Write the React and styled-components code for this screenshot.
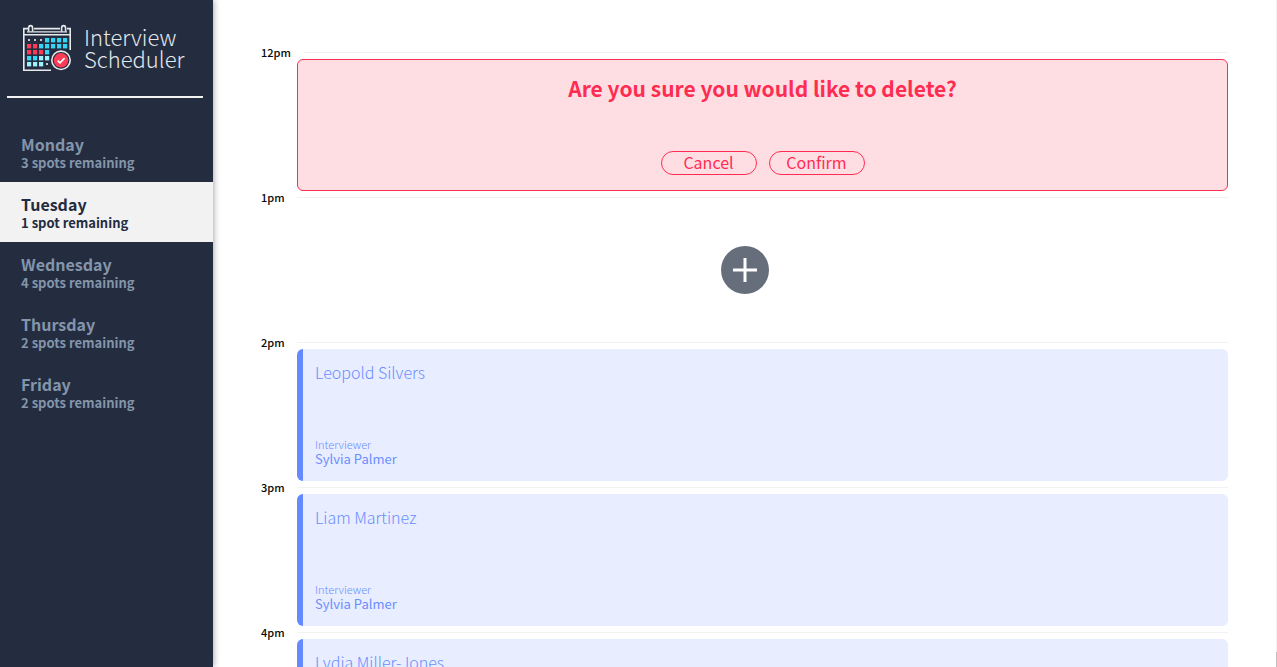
import React from "react";
import styled, { createGlobalStyle, css } from "styled-components";

const GlobalStyle = createGlobalStyle`
  *, *::before, *::after { box-sizing: border-box; }
  body {
    margin: 0;
    background: #ffffff;
    color: #0a0a0a;
    font-family: "Noto Sans CJK SC", "Noto Sans", sans-serif;
  }
  h1, h2, h3, h4, p, ul { margin: 0; padding: 0; }
  ul { list-style: none; }
  button { font-family: inherit; cursor: pointer; }
`;

const Layout = styled.main`
  display: flex;
  height: 100vh;
  overflow: hidden;
`;

const Sidebar = styled.section`
  flex: 0 0 213px;
  background: #242c40;
  box-shadow: 1px 0 6px rgba(20, 20, 50, 0.36);
`;

const Brand = styled.div`
  display: flex;
  gap: 12px;
  padding: 24px 0 0 22px;
  height: 96px;
`;

const BrandName = styled.h1`
  padding-top: 1px;
  font-size: 22px;
  line-height: 22px;
  font-weight: 200;
  color: #e4e7ea;
`;

const Separator = styled.hr`
  margin: 0 10px 24px 7px;
  border: 0;
  height: 2px;
  background: #f2f2f2;
`;

const DayItem = styled.li`
  button {
    display: block;
    width: 100%;
    height: 60px;
    padding: 10px 20px 10px 21px;
    border: 0;
    text-align: left;
    background: ${(p) => (p.$selected ? "#f2f2f2" : "transparent")};
    color: ${(p) => (p.$selected ? "#242c40" : "#8395ab")};
  }
`;

const DayName = styled.strong`
  display: block;
  font-size: 16px;
  line-height: 22px;
  font-weight: 700;
`;

const DaySpots = styled.span`
  display: block;
  font-size: 13px;
  line-height: 16px;
  font-weight: 700;
`;

const Schedule = styled.section`
  flex: 1;
  min-width: 0;
  padding: 46px 48px 0;
  overflow: hidden;
`;

const ScrollTrack = styled.div`
  flex: 0 0 1px;
  background: linear-gradient(to top, #c1c1c1 15px, #f1f1f1 15px);
`;

const TimeHeader = styled.header`
  display: flex;
  align-items: center;
  gap: 12px;
  height: 13px;

  &::after {
    content: "";
    flex: 1;
    height: 1px;
    background: #f2f2f2;
  }
`;

const TimeLabel = styled.h4`
  font-size: 11px;
  line-height: 13px;
  font-weight: 500;
`;

const cardBase = css`
  height: 132px;
  margin-left: 36px;
  border-radius: 6px;
`;

const ConfirmCard = styled.div`
  ${cardBase}
  display: flex;
  flex-direction: column;
  align-items: center;
  justify-content: space-between;
  padding: 13px 12px 15px;
  border: 1px solid #ff2c52;
  background: #ffdee3;
  color: #ff2c52;
`;

const ConfirmTitle = styled.h2`
  font-size: 21px;
  line-height: 30px;
  font-weight: 700;
`;

const Actions = styled.div`
  display: flex;
  gap: 12px;
`;

const PillButton = styled.button`
  width: 96px;
  height: 24px;
  padding: 0 0 2px;
  border: 1px solid #ff2c52;
  border-radius: 12px;
  background: transparent;
  color: #ff2c52;
  font-size: 16px;
  line-height: 20px;
`;

const EmptySlot = styled.div`
  display: flex;
  align-items: center;
  justify-content: center;
  height: 132px;
`;

const AddButton = styled.button`
  width: 48px;
  height: 48px;
  padding: 0;
  border: 0;
  border-radius: 50%;
  background: #666e7b;

  svg { display: block; }
`;

const ShowCard = styled.div`
  ${cardBase}
  display: flex;
  overflow: hidden;
  background: #e8edff;
  color: #6b8eff;

  &::before {
    content: "";
    flex: 0 0 6px;
    background: #658aff;
  }
`;

const ShowBody = styled.div`
  flex: 1;
  display: flex;
  flex-direction: column;
  justify-content: space-between;
  padding: 11px 12px 14px;
`;

const Student = styled.h2`
  font-size: 16px;
  line-height: 24px;
  font-weight: 200;
`;

const RoleLabel = styled.h4`
  font-size: 11px;
  line-height: 14px;
  font-weight: 200;
`;

const Interviewer = styled.h3`
  font-size: 13px;
  line-height: 16px;
  font-weight: 400;
`;

const days = [
  { name: "Monday", spots: 3 },
  { name: "Tuesday", spots: 1 },
  { name: "Wednesday", spots: 4 },
  { name: "Thursday", spots: 2 },
  { name: "Friday", spots: 2 },
];

const appointments = [
  { time: "12pm", mode: "confirm" },
  { time: "1pm", mode: "empty" },
  { time: "2pm", mode: "show", student: "Leopold Silvers", interviewer: "Sylvia Palmer" },
  { time: "3pm", mode: "show", student: "Liam Martinez", interviewer: "Sylvia Palmer" },
  { time: "4pm", mode: "show", student: "Lydia Miller-Jones", interviewer: "Sylvia Palmer" },
];

const cellRows = ["...cccc", "rrccccc", "rrrc", "ccll", "lll."];
const cellFill = { c: "#33d6f4", l: "#9cf2fd", r: "#ff3b55" };

function CalendarLogo() {
  return (
    <svg width="50" height="48" viewBox="0 0 50 48" aria-hidden="true">
      <g fill="none" stroke="#e6e8ea" strokeWidth="1.6">
        <path d="M29 46.2H1.8V4.6H6.4M12 4.6H38M45 4.6H48.2V26" />
        <path d="M1.8 10.8H48.2" />
        <path d="M5 7.8H45" strokeWidth="1.2" />
        <path d="M6.6 7.5V4.2A2 2.6 0 0 1 10.6 4.2V7.5M39.6 7.5V4.2A2 2.6 0 0 1 43.6 4.2V7.5" />
      </g>
      {cellRows.map((row, y) =>
        [...row].map((c, x) =>
          c === "." ? (
            <rect key={`${x}-${y}`} x={6 + x * 6} y={15 + y * 6} width="2" height="2" fill="#c3c8ce" />
          ) : (
            <rect key={`${x}-${y}`} x={5 + x * 6} y={14 + y * 6} width="4.2" height="4.4" fill={cellFill[c]} />
          )
        )
      )}
      <circle cx="39" cy="36.3" r="11" fill="#242c40" />
      <circle cx="39" cy="36.3" r="9.2" fill="none" stroke="#e6e8ea" strokeWidth="1.6" />
      <circle cx="39" cy="36.3" r="7.2" fill="#ff3b55" />
      <path d="M35.6 36.6L38 38.8L42.6 34.2" fill="none" stroke="#ffffff" strokeWidth="1.7" />
    </svg>
  );
}

function Appointment({ mode, student, interviewer }) {
  if (mode === "confirm") {
    return (
      <ConfirmCard>
        <ConfirmTitle>Are you sure you would like to delete?</ConfirmTitle>
        <Actions>
          <PillButton type="button">Cancel</PillButton>
          <PillButton type="button">Confirm</PillButton>
        </Actions>
      </ConfirmCard>
    );
  }
  if (mode === "empty") {
    return (
      <EmptySlot>
        <AddButton type="button" aria-label="Add">
          <svg width="48" height="48" viewBox="0 0 48 48" aria-hidden="true">
            <path d="M12 24H36M24 12V36" stroke="#ffffff" strokeWidth="3" fill="none" />
          </svg>
        </AddButton>
      </EmptySlot>
    );
  }
  return (
    <ShowCard>
      <ShowBody>
        <Student>{student}</Student>
        <div>
          <RoleLabel>Interviewer</RoleLabel>
          <Interviewer>{interviewer}</Interviewer>
        </div>
      </ShowBody>
    </ShowCard>
  );
}

export default function App() {
  return (
    <Layout>
      <GlobalStyle />
      <Sidebar>
        <Brand>
          <CalendarLogo />
          <BrandName>
            Interview
            <br />
            Scheduler
          </BrandName>
        </Brand>
        <Separator />
        <nav>
          <ul>
            {days.map(({ name, spots }) => (
              <DayItem key={name} $selected={name === "Tuesday"}>
                <button type="button">
                  <DayName>{name}</DayName>
                  <DaySpots>
                    {spots} {spots === 1 ? "spot" : "spots"} remaining
                  </DaySpots>
                </button>
              </DayItem>
            ))}
          </ul>
        </nav>
      </Sidebar>
      <Schedule>
        {appointments.map((a) => (
          <article key={a.time}>
            <TimeHeader>
              <TimeLabel>{a.time}</TimeLabel>
            </TimeHeader>
            <Appointment {...a} />
          </article>
        ))}
      </Schedule>
      <ScrollTrack />
    </Layout>
  );
}
